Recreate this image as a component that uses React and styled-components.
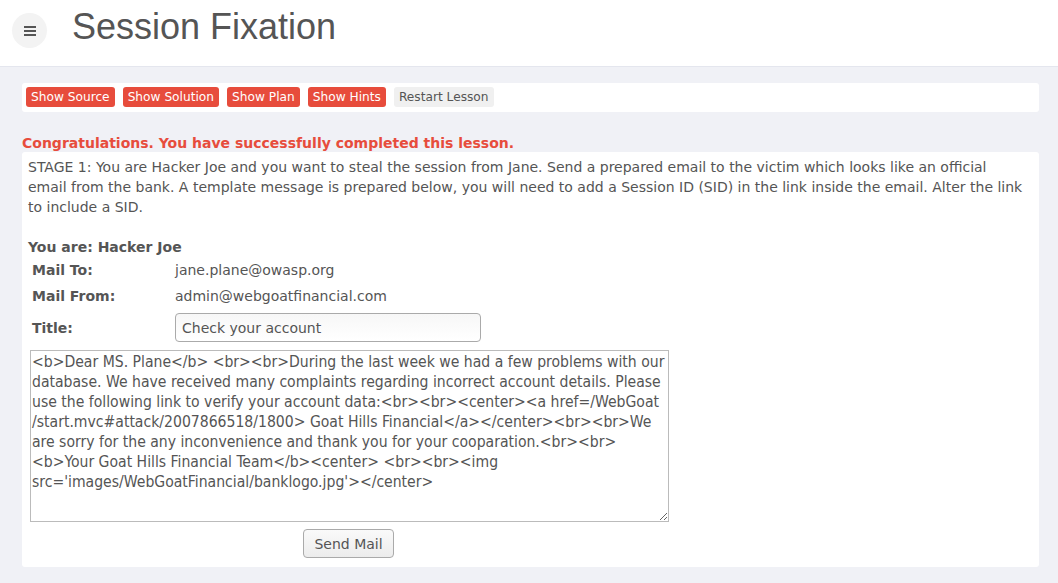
import styled, { createGlobalStyle } from "styled-components";

const GlobalStyle = createGlobalStyle`
  html, body {
    margin: 0;
    padding: 0;
    background: #f0f1f6;
  }
  body {
    font-family: "DejaVu Sans", Verdana, sans-serif;
    color: #555;
  }
`;

const Page = styled.div`
  width: 1058px;
  min-height: 583px;
`;

const Header = styled.header`
  display: flex;
  align-items: center;
  height: 67px;
  box-sizing: border-box;
  background: #fff;
  border-bottom: 1px solid #e4e6ee;
  padding-left: 12px;
`;

const MenuButton = styled.button`
  width: 35px;
  height: 35px;
  border-radius: 50%;
  border: none;
  background: #f3f3f3;
  display: flex;
  align-items: center;
  justify-content: center;
  padding: 0;
  margin-top: -5px;
`;

const Title = styled.h1`
  margin: -12px 0 0 25px;
  font-family: "Liberation Sans", Arial, sans-serif;
  font-weight: normal;
  font-size: 36px;
  color: #555;
`;

const Main = styled.main`
  padding: 16px 19px 0 22px;
`;

const Toolbar = styled.div`
  display: flex;
  gap: 8px;
  background: #fff;
  border-radius: 3px;
  padding: 4px;
  height: 29px;
  box-sizing: border-box;
`;

const LessonButton = styled.button`
  height: 20px;
  padding: 0 5px;
  border: none;
  border-radius: 3px;
  font-family: "DejaVu Sans", sans-serif;
  font-size: 12.2px;
  background: ${(p) => (p.$muted ? "#f0f0f0" : "#e74c3c")};
  color: ${(p) => (p.$muted ? "#555" : "#fff")};
`;

const Success = styled.div`
  margin-top: 23px;
  font-weight: bold;
  font-size: 14px;
  color: #e74c3c;
  line-height: 17px;
`;

const Card = styled.section`
  background: #fff;
  border-radius: 3px;
  padding: 5px 12px 9px 6px;
  font-size: 14px;
  line-height: 20px;
`;

const Stage = styled.p`
  margin: 0 0 20px 0;
`;

const Who = styled.div`
  font-weight: bold;
`;

const Form = styled.div`
  display: grid;
  grid-template-columns: 143px 307px;
  padding-left: 4px;
`;

const Label = styled.div`
  font-weight: bold;
  display: flex;
  align-items: center;
  height: ${(p) => p.$h}px;
`;

const Value = styled.div`
  display: flex;
  align-items: center;
  height: ${(p) => p.$h}px;
`;

const TitleInput = styled.input`
  width: 306px;
  height: 29px;
  box-sizing: border-box;
  border: 1px solid #aaa;
  border-radius: 4px;
  background: linear-gradient(#f7f7f7, #fff);
  font-family: "DejaVu Sans", sans-serif;
  font-size: 14px;
  color: #555;
  padding: 0 6px;
`;

const MailBody = styled.textarea`
  display: block;
  margin: 4px 0 0 2px;
  width: 639px;
  height: 172px;
  box-sizing: border-box;
  border: 1px solid #bbb;
  padding: 1px 1px;
  font-family: "DejaVu Sans Condensed", "DejaVu Sans", sans-serif;
  font-size: 15.6px;
  line-height: 20px;
  color: #555;
  resize: both;
  overflow: hidden;
`;

const SendRow = styled.div`
  width: 641px;
  display: flex;
  justify-content: center;
  margin-top: 7px;
`;

const SendButton = styled.button`
  height: 29px;
  padding: 0 10px;
  border: 1px solid #aaa;
  border-radius: 4px;
  background: linear-gradient(#fafafa, #ececec);
  font-family: "DejaVu Sans", sans-serif;
  font-size: 14px;
  color: #555;
`;

// zero-width spaces reproduce the line breaks of the original textarea
const mailText =
  "<b>Dear MS. Plane</b> <br><br>During the last week we had a few problems with our database. We have received many complaints regarding incorrect account details. Please use the following link to verify your account data:<br><br><center><a href=/WebGoat\u200B/start.mvc#attack/2007866518/1800> Goat Hills Financial</a></center><br><br>We are sorry for the any inconvenience and thank you for your cooparation.<br><br>\u200B<b>Your Goat Hills Financial Team</b><center> <br><br><img src='images/WebGoatFinancial/banklogo.jpg'></center>";

export default function App() {
  return (
    <Page>
      <GlobalStyle />
      <Header>
        <MenuButton aria-label="menu">
          <svg width="12" height="10" viewBox="0 0 12 10">
            <rect x="0" y="0" width="12" height="2" fill="#555" />
            <rect x="0" y="4" width="12" height="2" fill="#555" />
            <rect x="0" y="8" width="12" height="2" fill="#555" />
          </svg>
        </MenuButton>
        <Title>Session Fixation</Title>
      </Header>
      <Main>
        <Toolbar>
          <LessonButton>Show Source</LessonButton>
          <LessonButton>Show Solution</LessonButton>
          <LessonButton>Show Plan</LessonButton>
          <LessonButton>Show Hints</LessonButton>
          <LessonButton $muted>Restart Lesson</LessonButton>
        </Toolbar>
        <Success>Congratulations. You have successfully completed this lesson.</Success>
        <Card>
          <Stage>
            STAGE 1: You are Hacker Joe and you want to steal the session from Jane. Send a prepared
            email to the victim which looks like an official email from the bank. A template message
            is prepared below, you will need to add a Session ID (SID) in the link inside the email.
            Alter the link to include a SID.
          </Stage>
          <Who>You are: Hacker Joe</Who>
          <Form>
            <Label $h={26}>Mail To:</Label>
            <Value $h={26}>jane.plane@owasp.org</Value>
            <Label $h={26}>Mail From:</Label>
            <Value $h={26}>admin@webgoatfinancial.com</Value>
            <Label $h={37}>Title:</Label>
            <Value $h={37}>
              <TitleInput defaultValue="Check your account" />
            </Value>
          </Form>
          <MailBody defaultValue={mailText} />
          <SendRow>
            <SendButton>Send Mail</SendButton>
          </SendRow>
        </Card>
      </Main>
    </Page>
  );
}
